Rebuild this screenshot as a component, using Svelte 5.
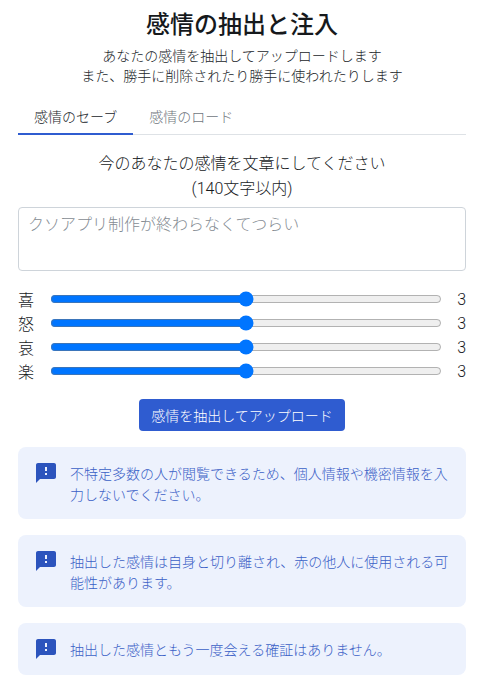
<script lang="ts">
  // Save tab of the emotion extractor: text + four sliders + notices
  let text = $state('');
  let emotions = $state([
    { label: '喜', value: 3 },
    { label: '怒', value: 3 },
    { label: '哀', value: 3 },
    { label: '楽', value: 3 },
  ]);

  const notices = [
    '不特定多数の人が閲覧できるため、個人情報や機密情報を入力しないでください。',
    '抽出した感情は自身と切り離され、赤の他人に使用される可能性があります。',
    '抽出した感情ともう一度会える確証はありません。',
  ];
</script>

<main class="page">
  <h1>感情の抽出と注入</h1>
  <p class="lead">あなたの感情を抽出してアップロードします<br />また、勝手に削除されたり勝手に使われたりします</p>

  <div class="tabs">
    <button class="tab active">感情のセーブ</button>
    <button class="tab">感情のロード</button>
  </div>

  <p class="prompt">今のあなたの感情を文章にしてください<br />(140文字以内)</p>

  <textarea bind:value={text} placeholder="クソアプリ制作が終わらなくてつらい"></textarea>

  <div class="sliders">
    {#each emotions as emotion}
      <label class="slider">
        <span class="name">{emotion.label}</span>
        <input type="range" min="1" max="5" bind:value={emotion.value} />
        <span class="value">{emotion.value}</span>
      </label>
    {/each}
  </div>

  <button class="submit">感情を抽出してアップロード</button>

  <div class="notices">
    {#each notices as notice}
      <div class="notice">
        <svg viewBox="0 0 24 24" width="24" height="24" fill="currentColor">
          <path d="M20 2H4c-1.1 0-1.99.9-1.99 2L2 22l4-4h14c1.1 0 2-.9 2-2V4c0-1.1-.9-2-2-2zm-7 12h-2v-2h2v2zm0-4h-2V6h2v4z" />
        </svg>
        <p>{notice}</p>
      </div>
    {/each}
  </div>
</main>

<style>
  :global(body) {
    background: #fff;
  }

  .page {
    padding: 9px 16px 16px 18px;
    font-family: Roboto, "Noto Sans CJK JP", sans-serif;
    font-weight: 300;
    color: #16191c;
  }

  h1 {
    margin: 0;
    font-size: 24px;
    line-height: 32px;
    font-weight: 500;
    text-align: center;
  }

  .lead {
    margin: 5px 0 0;
    font-size: 14px;
    line-height: 20px;
    text-align: center;
    color: #212529;
  }

  .tabs {
    display: flex;
    margin-top: 13px;
    border-bottom: 1px solid #dee2e6;
  }

  .tab {
    height: 36px;
    padding: 0 16px;
    margin-bottom: -1px;
    border: 0;
    border-bottom: 2px solid transparent;
    background: none;
    font: inherit;
    font-size: 14px;
    color: #6f767d;
  }

  .tab.active {
    border-bottom-color: #2f5cd0;
    color: #212529;
  }

  .prompt {
    margin: 16px 0 0;
    font-size: 16px;
    line-height: 25px;
    text-align: center;
  }

  textarea {
    display: block;
    box-sizing: border-box;
    width: 100%;
    height: 64px;
    margin-top: 6px;
    padding: 6px 9px;
    border: 1px solid #ced4da;
    border-radius: 4px;
    font: inherit;
    font-size: 16px;
    line-height: 22px;
    resize: none;
  }

  textarea::placeholder {
    color: #858c93;
  }

  .sliders {
    margin-top: 16px;
  }

  .slider {
    display: flex;
    align-items: center;
    height: 24px;
    font-size: 16px;
  }

  .name {
    width: 16px;
  }

  input[type='range'] {
    width: 392px;
    margin: 0 0 0 16px;
    accent-color: #0075ff;
  }

  .value {
    flex: 1;
    text-align: right;
  }

  .submit {
    display: block;
    height: 32px;
    margin: 16px auto 0;
    padding: 0 12px;
    border: 0;
    border-radius: 4px;
    background: #2f5cd0;
    color: #fff;
    font: inherit;
    font-size: 14px;
  }

  .notices {
    display: flex;
    flex-direction: column;
    gap: 16px;
    margin-top: 16px;
  }

  .notice {
    display: flex;
    gap: 12px;
    box-sizing: border-box;
    min-height: 52px;
    padding: 15px 16px 13px;
    border-radius: 8px;
    background: #edf2fd;
    color: #2c54bd;
  }

  .notice svg {
    flex: none;
    margin-top: -1px;
  }

  .notice p {
    margin: 2px 0 0;
    font-size: 14px;
    line-height: 21px;
    color: #3a60c6;
  }
</style>
